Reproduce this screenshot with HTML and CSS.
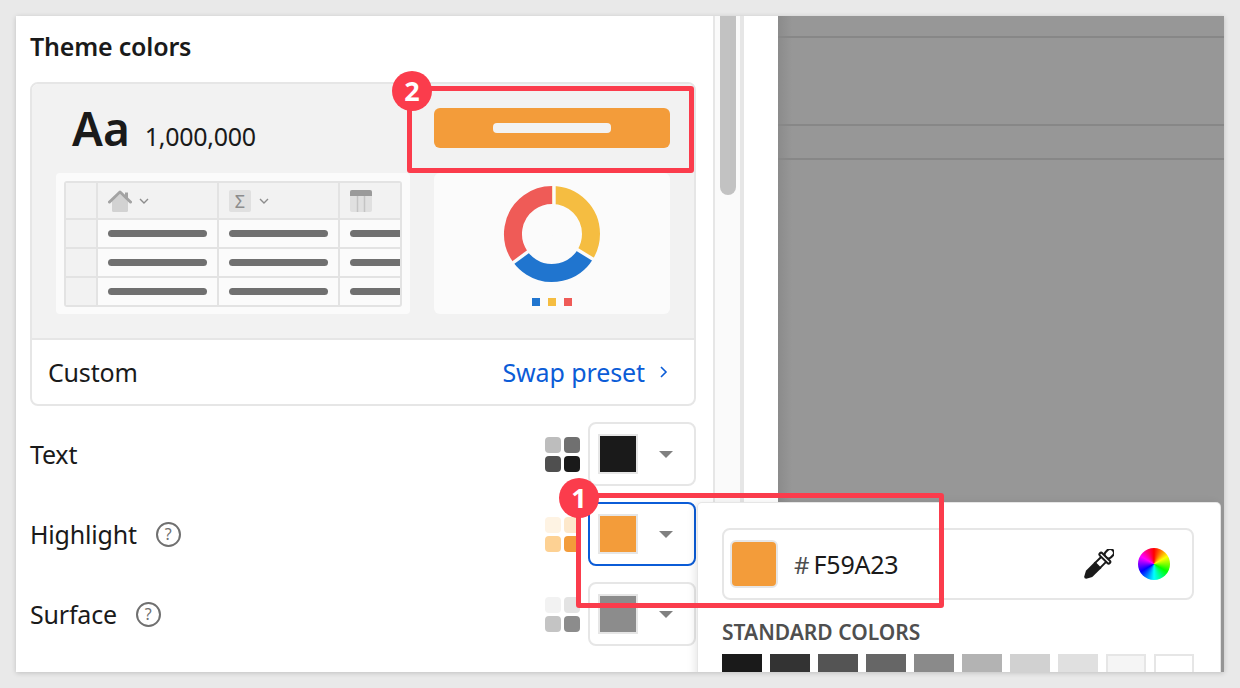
FILE: index.html
```html
<!doctype html>
<html lang="en">
  <head>
    <meta charset="UTF-8" />
    <title>Theme colors</title>
    <link rel="stylesheet" href="styles.css">
  </head>
  <body>
    <div class="stage">
      <section class="panel">
        <h2 class="panel-title">Theme colors</h2>

        <div class="card">
          <div class="preview">
            <div class="type-sample">
              <span class="type-big">Aa</span>
              <span class="type-num">1,000,000</span>
            </div>
            <div class="btn-sample"><span class="btn-bar"></span></div>

            <div class="table-sample">
              <div class="mini-table">
                <div class="cell head"></div>
                <div class="cell head col-head">
                  <svg class="home-icon" width="24" height="22" viewBox="0 0 24 22">
                    <path d="M4 11 L12 4 L20 11 V20.5 Q20 22 18.5 22 H5.5 Q4 22 4 20.5 Z" fill="#d2d2d2" />
                    <path d="M1.5 12 L12 2 L22.5 12" fill="none" stroke="#a3a3a3" stroke-width="3" stroke-linecap="round" stroke-linejoin="round" />
                    <path d="M17 2.5 H20 V9 L17 6 Z" fill="#a3a3a3" />
                  </svg>
                  <svg class="chev" width="10" height="6" viewBox="0 0 10 6"><path d="M1 1 L5 5 L9 1" fill="none" stroke="#8c8c8c" stroke-width="1.4" /></svg>
                </div>
                <div class="cell head col-head">
                  <span class="sigma">Σ</span>
                  <svg class="chev wide" width="10" height="6" viewBox="0 0 10 6"><path d="M1 1 L5 5 L9 1" fill="none" stroke="#8c8c8c" stroke-width="1.4" /></svg>
                </div>
                <div class="cell head col-head">
                  <svg width="22" height="22" viewBox="0 0 22 22">
                    <rect width="22" height="22" rx="2" fill="#e0e0e0" />
                    <path d="M0 6 V2 Q0 0 2 0 H20 Q22 0 22 2 V6 Z" fill="#9a9a9a" />
                    <path d="M7.5 6 V22 M14.5 6 V22" stroke="#c4c4c4" stroke-width="1.5" />
                  </svg>
                </div>

                <div class="cell head"></div>
                <div class="cell"><span class="line"></span></div>
                <div class="cell"><span class="line"></span></div>
                <div class="cell"><span class="line"></span></div>
                <div class="cell head"></div>
                <div class="cell"><span class="line"></span></div>
                <div class="cell"><span class="line"></span></div>
                <div class="cell"><span class="line"></span></div>
                <div class="cell head"></div>
                <div class="cell"><span class="line"></span></div>
                <div class="cell"><span class="line"></span></div>
                <div class="cell"><span class="line"></span></div>
              </div>
            </div>

            <div class="chart-sample">
              <svg class="donut" width="100" height="100" viewBox="0 0 100 100">
                <g fill="none" stroke-width="18">
                  <circle cx="50" cy="50" r="39" pathLength="360" stroke="#f5bd41" stroke-dasharray="122 360" transform="rotate(-90 50 50)" />
                  <circle cx="50" cy="50" r="39" pathLength="360" stroke="#2075cf" stroke-dasharray="112 360" transform="rotate(32 50 50)" />
                  <circle cx="50" cy="50" r="39" pathLength="360" stroke="#ef5b57" stroke-dasharray="126 360" transform="rotate(144 50 50)" />
                </g>
                <g stroke="#fbfbfb" stroke-width="3.4">
                  <path d="M52 50 V0" />
                  <path d="M50 50 L94 77" />
                  <path d="M50 50 L8 81" />
                </g>
              </svg>
              <div class="legend">
                <span class="legend-dot blue"></span>
                <span class="legend-dot yellow"></span>
                <span class="legend-dot red"></span>
              </div>
            </div>
          </div>

          <div class="card-foot">
            <span class="foot-label">Custom</span>
            <a class="swap-link">Swap preset
              <svg width="9" height="14" viewBox="0 0 9 14"><path d="M2 2 L7 7 L2 12" fill="none" stroke="#0b5cd7" stroke-width="1.6" /></svg>
            </a>
          </div>
        </div>

        <div class="color-row">
          <span class="row-label">Text</span>
          <div class="row-controls">
            <div class="minis">
              <span style="background:#bdbdbd"></span>
              <span style="background:#707070"></span>
              <span style="background:#4f4f4f"></span>
              <span style="background:#1a1a1a"></span>
            </div>
            <div class="dropdown">
              <span class="swatch" style="background:#1a1a1a"></span>
              <span class="caret"></span>
            </div>
          </div>
        </div>

        <div class="color-row">
          <span class="row-label">Highlight <span class="help">?</span></span>
          <div class="row-controls">
            <div class="minis">
              <span style="background:#fef3e3"></span>
              <span style="background:#fde8cb"></span>
              <span style="background:#fdd193"></span>
              <span style="background:#f39c3a"></span>
            </div>
            <div class="dropdown active">
              <span class="swatch" style="background:#f39c3a"></span>
              <span class="caret"></span>
            </div>
          </div>
        </div>

        <div class="color-row">
          <span class="row-label">Surface <span class="help">?</span></span>
          <div class="row-controls">
            <div class="minis">
              <span style="background:#f2f2f2"></span>
              <span style="background:#e3e3e3"></span>
              <span style="background:#c4c4c4"></span>
              <span style="background:#8c8c8c"></span>
            </div>
            <div class="dropdown">
              <span class="swatch" style="background:#8c8c8c"></span>
              <span class="caret"></span>
            </div>
          </div>
        </div>
      </section>

      <div class="scrollbar"><div class="thumb"></div></div>
      <div class="gutter"></div>

      <div class="canvas">
        <div class="canvas-row r1"></div>
        <div class="canvas-row r2"></div>
        <div class="canvas-row r3"></div>
      </div>

      <div class="popover">
        <div class="hex-field">
          <span class="hex-swatch"></span>
          <span class="hex-hash">#</span>
          <span class="hex-value">F59A23</span>
          <svg class="dropper" width="30" height="30" viewBox="0 0 30 30">
            <g transform="rotate(45 15 15)">
              <rect x="11.2" y="-4.5" width="7.6" height="10" rx="3.8" fill="#fff" stroke="#1a1a1a" stroke-width="2.2" />
              <rect x="8" y="5" width="14" height="3.4" rx="1.7" fill="#fff" stroke="#1a1a1a" stroke-width="2" />
              <path d="M11.5 8.5 V18 M18.5 8.5 V18" stroke="#1a1a1a" stroke-width="2" fill="none" />
              <path d="M10.5 16 H19.5 V29 L16.5 34.5 Q15 36 13.5 34.5 L10.5 29 Z" fill="#1a1a1a" />
            </g>
          </svg>
          <span class="wheel"></span>
        </div>
        <div class="std-label">STANDARD COLORS</div>
        <div class="std-grid">
          <span style="background:#1a1a1a"></span>
          <span style="background:#333333"></span>
          <span style="background:#545454"></span>
          <span style="background:#666666"></span>
          <span style="background:#8a8a8a"></span>
          <span style="background:#b3b3b3"></span>
          <span style="background:#d1d1d1"></span>
          <span style="background:#e0e0e0"></span>
          <span class="bordered" style="background:#f5f5f5"></span>
          <span class="bordered" style="background:#ffffff"></span>
        </div>
      </div>

      <div class="callout callout-one"><span class="badge">1</span></div>
      <div class="callout callout-two"><span class="badge">2</span></div>
    </div>
  </body>
</html>
```

FILE: styles.css
```css
* {
  box-sizing: border-box;
}
html,
body {
  height: 100%;
}
body {
  margin: 0;
  padding: 16px;
  background-color: #e9e9e9;
  font-family: "Noto Sans", Arial, sans-serif;
  color: #1a1a1a;
  overflow: hidden;
}
.stage {
  position: relative;
  display: flex;
  width: 1208px;
  height: 656px;
  background-color: #fff;
  box-shadow: 0 1px 5px rgba(0, 0, 0, 0.18);
  overflow: hidden;
}

/* left panel */
.panel {
  flex: 0 0 697px;
  padding: 13px 17px 0 14px;
}
.panel-title {
  margin: 0 0 19px;
  font-size: 25px;
  line-height: 34px;
  font-weight: 600;
  letter-spacing: -0.2px;
}
.card {
  border: 2px solid #e6e6e6;
  border-radius: 8px;
  overflow: hidden;
}
.preview {
  display: grid;
  grid-template-columns: 354px 236px;
  grid-template-rows: 40px 141px;
  column-gap: 24px;
  row-gap: 25px;
  height: 256px;
  padding: 24px 0 0 24px;
  background-color: #f2f2f2;
  border-bottom: 2px solid #e6e6e6;
}
.type-sample {
  display: flex;
  align-items: baseline;
  gap: 15px;
  padding-left: 16px;
}
.type-big {
  font-size: 46px;
  line-height: 40px;
  font-weight: 600;
}
.type-num {
  font-size: 25px;
  letter-spacing: -0.3px;
}
.btn-sample {
  display: flex;
  align-items: center;
  justify-content: center;
  background-color: #f39c3a;
  border-radius: 6px;
}
.btn-bar {
  width: 118px;
  height: 10px;
  border-radius: 4px;
  background-color: #f2f2f2;
}
.table-sample {
  padding: 8px;
  background-color: #fbfbfb;
  border-radius: 4px;
}
.mini-table {
  display: grid;
  grid-template-columns: 32px 121px 121px 64px;
  grid-template-rows: 37px 29px 29px 27px;
  height: 126px;
  border: 2px solid #e3e3e3;
  border-radius: 3px;
  overflow: hidden;
}
.cell {
  display: flex;
  align-items: center;
  padding-left: 10px;
  border-right: 2px solid #e3e3e3;
  border-bottom: 2px solid #e3e3e3;
  overflow: hidden;
}
.cell:nth-child(4n) {
  border-right: 0;
}
.cell:nth-last-child(-n + 4) {
  border-bottom: 0;
}
.cell.head {
  background-color: #f2f2f2;
}
.col-head {
  gap: 5px;
}
.line {
  flex: 0 0 99px;
  height: 7px;
  border-radius: 4px;
  background-color: #707070;
}
.sigma {
  width: 22px;
  height: 22px;
  background-color: #e0e0e0;
  border-radius: 2px;
  color: #8c8c8c;
  font-size: 18px;
  line-height: 22px;
  text-align: center;
}
.chev {
  margin-left: 2px;
}
.chev.wide {
  margin-left: 3px;
}
.chart-sample {
  display: flex;
  flex-direction: column;
  align-items: center;
  padding-top: 11px;
  background-color: #fbfbfb;
  border-radius: 6px;
}
.donut {
  display: block;
}
.legend {
  display: flex;
  gap: 8px;
  margin-top: 14px;
}
.legend-dot {
  width: 8px;
  height: 8px;
}
.legend-dot.blue {
  background-color: #2075cf;
}
.legend-dot.yellow {
  background-color: #f5bd41;
}
.legend-dot.red {
  background-color: #ef5b57;
}
.card-foot {
  display: flex;
  align-items: center;
  justify-content: space-between;
  height: 64px;
  padding: 0 26px 0 16px;
  font-size: 25px;
  letter-spacing: -0.2px;
}
.swap-link {
  display: flex;
  align-items: center;
  gap: 14px;
  color: #0b5cd7;
  letter-spacing: -0.1px;
}

/* colour rows */
.color-row {
  display: flex;
  align-items: center;
  justify-content: space-between;
  height: 64px;
  margin-top: 16px;
}
.row-label {
  display: flex;
  align-items: center;
  gap: 8px;
  font-size: 25px;
  letter-spacing: -0.2px;
}
.help {
  width: 25px;
  height: 25px;
  margin-left: 11px;
  border: 2px solid #707070;
  border-radius: 50%;
  color: #707070;
  font-size: 16px;
  line-height: 21px;
  letter-spacing: 0;
  text-align: center;
}
.row-controls {
  display: flex;
  align-items: center;
  gap: 8px;
}
.minis {
  display: grid;
  grid-template-columns: 16px 16px;
  grid-auto-rows: 16px;
  gap: 3px;
}
.minis span {
  border-radius: 4px;
}
.dropdown {
  display: flex;
  align-items: center;
  width: 108px;
  height: 64px;
  padding-left: 8px;
  border: 2px solid #e6e6e6;
  border-radius: 8px;
}
.dropdown.active {
  border-color: #0b5cd7;
}
.swatch {
  width: 40px;
  height: 40px;
  border: 2px solid #e6e6e6;
}
.caret {
  margin-left: 21px;
  border-left: 7px solid transparent;
  border-right: 7px solid transparent;
  border-top: 7px solid #808080;
}

/* middle strip */
.scrollbar {
  flex: 0 0 31px;
  padding-left: 5px;
  background-color: #fafafa;
  border-left: 2px solid #e6e6e6;
  border-right: 4px solid #e6e6e6;
}
.thumb {
  width: 16px;
  height: 179px;
  background-color: #c2c2c2;
  border-radius: 0 0 8px 8px;
}
.gutter {
  flex: 0 0 34px;
  background-color: #fff;
}

/* dimmed canvas */
.canvas {
  flex: 1;
  background: linear-gradient(90deg, #8b8b8b 0, #979797 14px);
}
.canvas-row {
  height: 2px;
  background-color: #878787;
}
.canvas-row.r1 {
  margin-top: 20px;
}
.canvas-row.r2 {
  margin-top: 86px;
}
.canvas-row.r3 {
  margin-top: 32px;
}

/* colour picker */
.popover {
  position: absolute;
  left: 682px;
  top: 487px;
  width: 522px;
  height: 220px;
  padding: 25px 24px 0;
  background-color: #fff;
  border-radius: 4px;
  box-shadow: 0 0 0 1px #e6e6e6, -3px 0 8px rgba(0, 0, 0, 0.1);
}
.hex-field {
  display: flex;
  align-items: center;
  width: 472px;
  height: 72px;
  padding: 0 22px 0 6px;
  border: 2px solid #e6e6e6;
  border-radius: 8px;
}
.hex-swatch {
  width: 48px;
  height: 48px;
  background-color: #f39c3a;
  border: 2px solid #e6e6e6;
  border-radius: 6px;
}
.hex-hash {
  margin-left: 16px;
  color: #4f4f4f;
  font-size: 24px;
}
.hex-value {
  flex: 1;
  margin-left: 4px;
  font-size: 25px;
  letter-spacing: -0.2px;
}
.wheel {
  width: 32px;
  height: 32px;
  margin-left: 24px;
  border-radius: 50%;
  background: conic-gradient(red, yellow, lime, cyan, blue, magenta, red);
}
.std-label {
  margin-top: 18px;
  color: #4f4f4f;
  font-size: 21px;
  line-height: 28px;
  font-weight: 600;
}
.std-grid {
  display: flex;
  gap: 8px;
  margin-top: 8px;
}
.std-grid span {
  width: 40px;
  height: 40px;
}
.std-grid .bordered {
  border: 2px solid #e6e6e6;
}

/* annotations */
.callout {
  position: absolute;
  border: 5px solid #fb3c4c;
  border-radius: 3px;
}
.callout-one {
  left: 560px;
  top: 477px;
  width: 368px;
  height: 115px;
}
.callout-two {
  left: 391px;
  top: 70px;
  width: 287px;
  height: 87px;
}
.badge {
  position: absolute;
  left: -20px;
  top: -20px;
  width: 40px;
  height: 40px;
  border-radius: 50%;
  background-color: #fb3c4c;
  color: #fff;
  font-size: 27px;
  line-height: 40px;
  font-weight: 700;
  text-align: center;
}
.callout-one .badge {
  left: -22px;
}
```
